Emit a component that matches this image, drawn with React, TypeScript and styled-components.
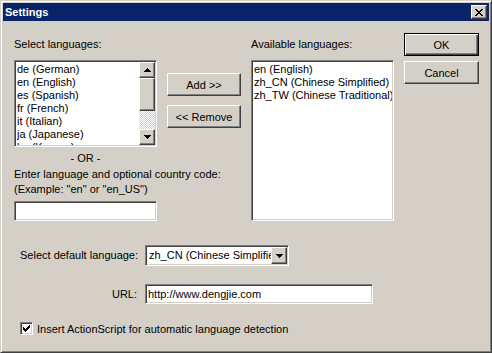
import React from 'react';
import styled, { createGlobalStyle, css } from 'styled-components';

/** Style */

const face = '#d4d0c8';

const GlobalStyle = createGlobalStyle`
  html, body {
    margin: 0;
    padding: 0;
    background: ${face};
  }
  body {
    font-family: "Liberation Sans", Arial, sans-serif;
    font-size: 11px;
    color: #000;
  }
  * {
    box-sizing: border-box;
  }
`;

const sunken = css`
  border: 1px solid;
  border-color: #808080 #fff #fff #808080;
  box-shadow: inset 1px 1px #404040, inset -1px -1px ${face};
  background: #fff;
`;

const raised = css`
  border: 1px solid;
  border-color: #fff #404040 #404040 #fff;
  box-shadow: inset -1px -1px #808080, inset 1px 1px ${face};
  background: ${face};
`;

const Window = styled.div`
  width: 492px;
  height: 353px;
  background: ${face};
  border: 1px solid;
  border-color: ${face} #404040 #404040 ${face};
  box-shadow: inset 1px 1px #fff, inset -1px -1px #808080;
  padding: 2px;
  display: flex;
  flex-direction: column;
`;

const TitleBar = styled.div`
  height: 18px;
  background: #0a246a;
  display: flex;
  align-items: center;
  justify-content: space-between;
  padding: 0 2px;
`;

const Title = styled.span`
  color: #fff;
  font-weight: bold;
`;

const CloseButton = styled.div`
  ${raised};
  width: 16px;
  height: 14px;
  display: flex;
  align-items: center;
  justify-content: center;
`;

const Body = styled.div`
  padding: 12px 10px 0 11px;
`;

const TopGrid = styled.div`
  display: grid;
  grid-template-columns: 143px 74px 143px 75px;
  column-gap: 10px;
  align-items: start;
`;

const Column = styled.div<{ $top: number; $gap?: number }>`
  display: flex;
  flex-direction: column;
  padding-top: ${(p) => p.$top}px;
  gap: ${(p) => p.$gap ?? 0}px;
`;

const Label = styled.div`
  line-height: 13px;
  margin-bottom: 9px;
  white-space: nowrap;
`;

const ListBox = styled.div<{ $height: number }>`
  ${sunken};
  height: ${(p) => p.$height}px;
  padding: 1px;
  display: flex;
  overflow: hidden;
`;

const Items = styled.div`
  flex: 1;
  padding: 1px 0 0 1px;
  overflow: hidden;
`;

const Item = styled.div`
  line-height: 13px;
  white-space: nowrap;
`;

const ScrollBar = styled.div`
  width: 16px;
  display: flex;
  flex-direction: column;
`;

const ScrollButton = styled.div<{ $height: number }>`
  ${raised};
  height: ${(p) => p.$height}px;
  flex-shrink: 0;
  display: flex;
  align-items: center;
  justify-content: center;
`;

const Track = styled.div`
  flex: 1;
  background-color: #fff;
  background-image: conic-gradient(${face} 25%, transparent 0 50%, ${face} 0 75%, transparent 0);
  background-size: 2px 2px;
`;

const Note = styled.div<{ $center?: boolean; $top?: number }>`
  line-height: 15.5px;
  white-space: nowrap;
  text-align: ${(p) => (p.$center ? 'center' : 'left')};
  margin-top: ${(p) => p.$top ?? 0}px;
`;

const TextField = styled.div<{ $width?: number; $top?: number }>`
  ${sunken};
  height: 20px;
  width: ${(p) => (p.$width ? `${p.$width}px` : '100%')};
  margin-top: ${(p) => p.$top ?? 0}px;
  padding: 0 2px;
  line-height: 18px;
  white-space: nowrap;
  overflow: hidden;
`;

const Button = styled.div<{ $default?: boolean }>`
  ${raised};
  height: 23px;
  display: flex;
  align-items: center;
  justify-content: center;
  white-space: nowrap;
  ${(p) =>
    p.$default &&
    css`
      border: 1px solid #000;
      box-shadow: inset 1px 1px #fff, inset -1px -1px #404040, inset -2px -2px #808080;
    `}
`;

const Form = styled.div`
  display: grid;
  grid-template-columns: 117px auto;
  column-gap: 8px;
  row-gap: 18px;
  align-items: center;
  justify-items: start;
  margin: 24px 0 0 6px;
`;

const FieldLabel = styled.div<{ $right?: boolean }>`
  justify-self: ${(p) => (p.$right ? 'end' : 'start')};
  white-space: nowrap;
  line-height: 13px;
`;

const Combo = styled.div`
  ${sunken};
  width: 144px;
  height: 21px;
  padding: 1px;
  display: flex;
`;

const ComboText = styled.div`
  flex: 1;
  padding-left: 2px;
  line-height: 17px;
  white-space: nowrap;
  overflow: hidden;
`;

const ComboButton = styled.div`
  ${raised};
  width: 16px;
  height: 17px;
  display: flex;
  align-items: center;
  justify-content: center;
`;

const CheckRow = styled.div`
  grid-column: 1 / -1;
  display: flex;
  align-items: center;
  gap: 4px;
`;

const CheckBox = styled.div`
  ${sunken};
  width: 13px;
  height: 13px;
  display: flex;
  align-items: center;
  justify-content: center;
`;

/** End */

const UpArrow = () => (
  <svg width="7" height="4" viewBox="0 0 7 4">
    <path d="M3 0h1v1h-1z M2 1h3v1h-3z M1 2h5v1h-5z M0 3h7v1h-7z" fill="#000" />
  </svg>
);

const DownArrow = () => (
  <svg width="7" height="4" viewBox="0 0 7 4">
    <path d="M0 0h7v1h-7z M1 1h5v1h-5z M2 2h3v1h-3z M3 3h1v1h-1z" fill="#000" />
  </svg>
);

const CloseGlyph = () => (
  <svg width="8" height="7" viewBox="0 0 8 7">
    <path
      d="M0 0h2v1h-2z M6 0h2v1h-2z M1 1h2v1h-2z M5 1h2v1h-2z M2 2h4v1h-4z M3 3h2v1h-2z M2 4h4v1h-4z M1 5h2v1h-2z M5 5h2v1h-2z M0 6h2v1h-2z M6 6h2v1h-2z"
      fill="#000"
    />
  </svg>
);

const CheckGlyph = () => (
  <svg width="7" height="7" viewBox="0 0 7 7">
    <path
      d="M6 0h1v3h-1z M5 1h1v3h-1z M4 2h1v3h-1z M3 3h1v3h-1z M2 4h1v3h-1z M1 3h1v3h-1z M0 2h1v3h-1z"
      fill="#000"
    />
  </svg>
);

const sourceLanguages = [
  'de (German)',
  'en (English)',
  'es (Spanish)',
  'fr (French)',
  'it (Italian)',
  'ja (Japanese)',
  'ko (Korean)',
];

const availableLanguages = [
  'en (English)',
  'zh_CN (Chinese Simplified)',
  'zh_TW (Chinese Traditional)',
];

export default function App() {
  return (
    <>
      <GlobalStyle />
      <Window>
        <TitleBar>
          <Title>Settings</Title>
          <CloseButton>
            <CloseGlyph />
          </CloseButton>
        </TitleBar>
        <Body>
          <TopGrid>
            <Column $top={5}>
              <Label>Select languages:</Label>
              <ListBox $height={87}>
                <Items>
                  {sourceLanguages.map((lang) => (
                    <Item key={lang}>{lang}</Item>
                  ))}
                </Items>
                <ScrollBar>
                  <ScrollButton $height={16}>
                    <UpArrow />
                  </ScrollButton>
                  <ScrollButton $height={33} />
                  <Track />
                  <ScrollButton $height={16}>
                    <DownArrow />
                  </ScrollButton>
                </ScrollBar>
              </ListBox>
              <Note $center $top={4}>- OR -</Note>
              <Note>Enter language and optional country code:</Note>
              <Note>(Example: "en" or "en_US")</Note>
              <TextField $top={3} />
            </Column>
            <Column $top={40} $gap={9}>
              <Button>Add &gt;&gt;</Button>
              <Button>&lt;&lt; Remove</Button>
            </Column>
            <Column $top={5}>
              <Label>Available languages:</Label>
              <ListBox $height={161}>
                <Items>
                  {availableLanguages.map((lang) => (
                    <Item key={lang}>{lang}</Item>
                  ))}
                </Items>
              </ListBox>
            </Column>
            <Column $top={0} $gap={5}>
              <Button $default>OK</Button>
              <Button>Cancel</Button>
            </Column>
          </TopGrid>
          <Form>
            <FieldLabel>Select default language:</FieldLabel>
            <Combo>
              <ComboText>zh_CN (Chinese Simplified)</ComboText>
              <ComboButton>
                <DownArrow />
              </ComboButton>
            </Combo>
            <FieldLabel $right>URL:</FieldLabel>
            <TextField $width={228}>http://www.dengjie.com</TextField>
            <CheckRow>
              <CheckBox>
                <CheckGlyph />
              </CheckBox>
              <span>Insert ActionScript for automatic language detection</span>
            </CheckRow>
          </Form>
        </Body>
      </Window>
    </>
  );
}
